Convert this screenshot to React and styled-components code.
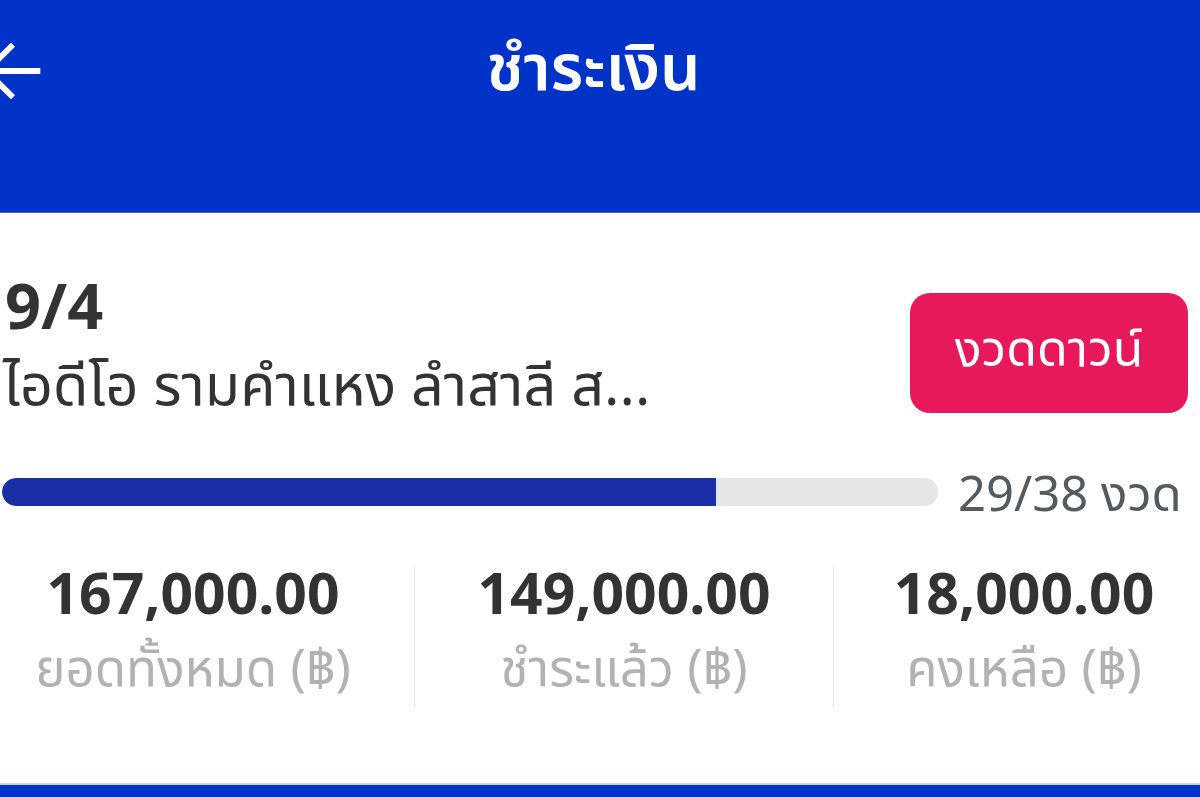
import React from "react";
import styled, { createGlobalStyle } from "styled-components";

const Global = createGlobalStyle`
  html, body { margin: 0; padding: 0; background: #ffffff; }
  body { font-family: "Noto Sans", "Noto Sans Thai", "Noto Sans CJK SC", sans-serif; }
  * { box-sizing: border-box; }
`;

const Page = styled.div`
  width: 1200px;
  height: 797px;
  overflow: hidden;
  display: flex;
  flex-direction: column;
  background: #ffffff;
`;

const Header = styled.header`
  height: 213px;
  flex: none;
  background: #0133c8;
  display: grid;
  grid-template-columns: 120px 1fr 120px;
  align-items: start;
  padding-top: 30px;
  border-bottom: 1px solid #3f62d6;
`;

const BackButton = styled.button`
  margin-left: -28px;
  width: 82px;
  height: 82px;
  padding: 0;
  border: none;
  background: transparent;
  display: flex;
  align-items: center;
  justify-content: center;
  color: #ffffff;
`;

const Title = styled.h1`
  margin: 0;
  text-align: center;
  color: #ffffff;
  font-size: 64px;
  font-weight: 600;
  line-height: 72px;
  padding-right: 13px;
`;

const Card = styled.section`
  flex: 1;
  background: #ffffff;
  padding: 54px 12px 0 3px;
  display: flex;
  flex-direction: column;
`;

const TopRow = styled.div`
  display: flex;
  justify-content: space-between;
  align-items: flex-start;
`;

const Info = styled.div`
  display: flex;
  flex-direction: column;
`;

const Code = styled.div`
  font-size: 63px;
  font-weight: 700;
  line-height: 76px;
  color: #333333;
  margin-left: 2px;
`;

const Branch = styled.div`
  margin-top: 4px;
  font-size: 57.5px;
  line-height: 72px;
  color: #333333;
`;

const DownButton = styled.button`
  margin-top: 26px;
  width: 278px;
  height: 120px;
  border: none;
  border-radius: 20px;
  background: #e8185c;
  color: #ffffff;
  font-family: inherit;
  font-size: 50px;
  font-weight: 400;
  display: flex;
  align-items: center;
  justify-content: center;
  padding: 0 0 4px 0;
`;

const ProgressRow = styled.div`
  margin-top: 43px;
  display: flex;
  align-items: center;
  gap: 20px;
`;

const Track = styled.div`
  margin-left: -1px;
  width: 936px;
  height: 28px;
  border-radius: 14px;
  background: #e6e6e6;
  overflow: hidden;
`;

const Fill = styled.div`
  height: 100%;
  background: #1a2ea6;
  border-radius: 14px 0 0 14px;
`;

const Count = styled.div`
  font-size: 49px;
  line-height: 60px;
  color: #555a5f;
  white-space: nowrap;
`;

const Stats = styled.div`
  margin-top: 45px;
  margin-left: -3px;
  display: grid;
  grid-template-columns: 414px 419px 1fr;
`;

const Stat = styled.div`
  display: flex;
  flex-direction: column;
  align-items: center;
  padding: 0 ${(p) => p.$padRight || 0}px 0 ${(p) => p.$padLeft || 0}px;
  border-left: ${(p) => (p.$divider ? "1px solid #e6e6e6" : "none")};
  height: 141px;
`;

const Amount = styled.div`
  font-size: 57px;
  font-weight: 700;
  line-height: 50px;
  color: #333333;
`;

const Label = styled.div`
  margin-top: 17px;
  font-size: 51px;
  line-height: 64px;
  color: #b2b2b2;
`;

const BottomBar = styled.div`
  height: 14px;
  flex: none;
  background: #0133c8;
  border-top: 2px solid #c7d3f2;
`;

function BackArrow() {
  return (
    <svg width="82" height="82" viewBox="0 0 24 24" fill="none">
      <path
        d="M20 12H4.6M12 4.3L4.3 12L12 19.7"
        stroke="currentColor"
        strokeWidth="1.7"
        strokeLinecap="butt"
      />
    </svg>
  );
}

const stats = [
  { amount: "167,000.00", label: "ยอดทั้งหมด (฿)", padRight: 28 },
  { amount: "149,000.00", label: "ชำระแล้ว (฿)", divider: true },
  { amount: "18,000.00", label: "คงเหลือ (฿)", divider: true, padLeft: 26 },
];

export default function App() {
  const paid = 29;
  const total = 38;
  return (
    <>
      <Global />
      <Page>
        <Header>
          <BackButton aria-label="back">
            <BackArrow />
          </BackButton>
          <Title>ชำระเงิน</Title>
          <div />
        </Header>
        <Card>
          <TopRow>
            <Info>
              <Code>9/4</Code>
              <Branch>ไอดีโอ รามคำแหง ลำสาลี ส...</Branch>
            </Info>
            <DownButton>งวดดาวน์</DownButton>
          </TopRow>
          <ProgressRow>
            <Track>
              <Fill style={{ width: `${(paid / total) * 100}%` }} />
            </Track>
            <Count>
              {paid}/{total} งวด
            </Count>
          </ProgressRow>
          <Stats>
            {stats.map((s) => (
              <Stat
                key={s.amount}
                $divider={s.divider}
                $padRight={s.padRight}
                $padLeft={s.padLeft}
              >
                <Amount>{s.amount}</Amount>
                <Label>{s.label}</Label>
              </Stat>
            ))}
          </Stats>
        </Card>
        <BottomBar />
      </Page>
    </>
  );
}
